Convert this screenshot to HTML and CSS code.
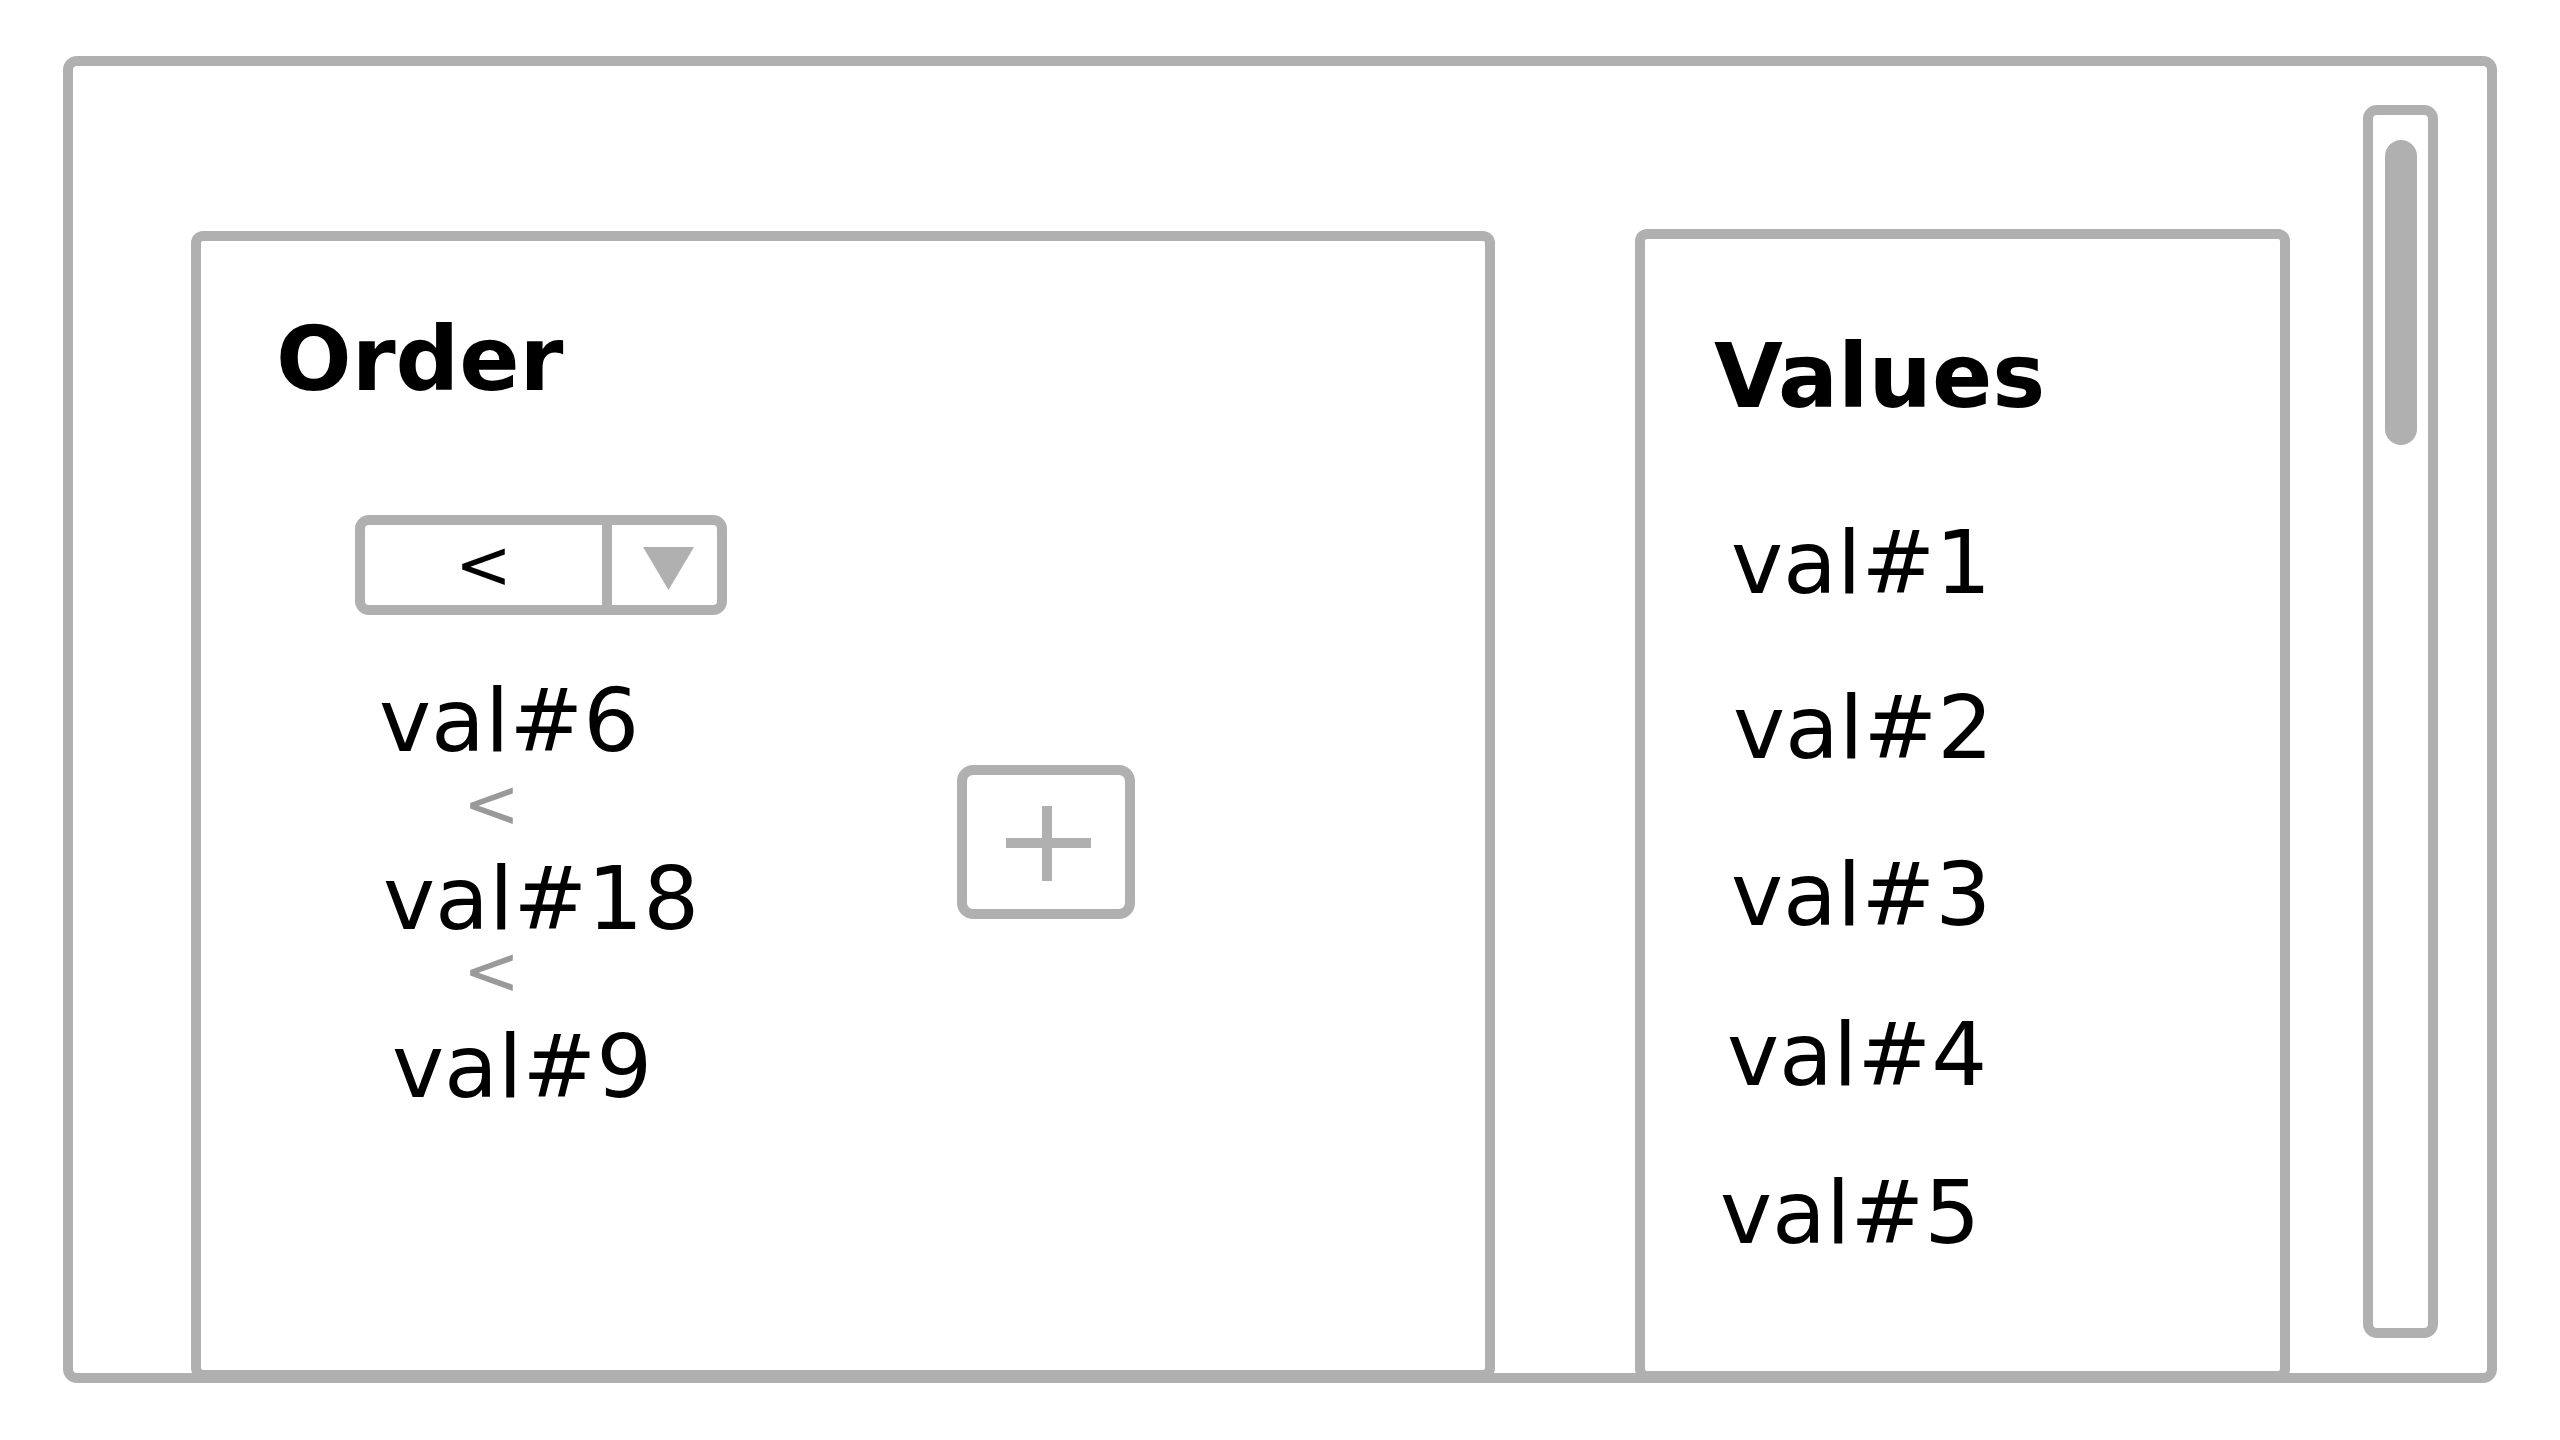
FILE: index.html
```html
<!DOCTYPE html>
<html lang="en">
<head>
<meta charset="utf-8">
<title>Order</title>
<link rel="stylesheet" href="styles.css">
</head>
<body>
<div class="frame">
  <section class="panel order-panel">
    <h2 class="title">Order</h2>
    <div class="order-body">
      <div class="order-col">
        <div class="select">
          <span class="select-value">&lt;</span>
          <span class="select-arrow">
            <svg width="51" height="43" viewBox="0 0 51 43"><polygon points="0,0 51,0 25.5,43" fill="#b0b0b0"/></svg>
          </span>
        </div>
        <ul class="chain">
          <li class="chain-item">val#6</li>
          <li class="chain-sep">&lt;</li>
          <li class="chain-item">val#18</li>
          <li class="chain-sep">&lt;</li>
          <li class="chain-item">val#9</li>
        </ul>
      </div>
      <button class="add-btn" type="button">
        <svg width="85" height="75" viewBox="0 0 85 75"><rect x="0" y="32" width="85" height="10" fill="#b0b0b0"/><rect x="36" y="0" width="10" height="75" fill="#b0b0b0"/></svg>
      </button>
    </div>
  </section>
  <section class="panel values-panel">
    <h2 class="title">Values</h2>
    <ul class="values">
      <li class="value-item">val#1</li>
      <li class="value-item">val#2</li>
      <li class="value-item">val#3</li>
      <li class="value-item">val#4</li>
      <li class="value-item">val#5</li>
    </ul>
  </section>
  <div class="scrollbar"><div class="thumb"></div></div>
</div>
</body>
</html>
```

FILE: styles.css
```css
* {
  box-sizing: border-box;
  margin: 0;
  padding: 0;
}

body {
  margin: 0;
  background: #ffffff;
  color: #000000;
  font-family: "DejaVu Sans", "Noto Sans", sans-serif;
}

.frame {
  margin: 56px 0 0 63px;
  width: 2434px;
  height: 1327px;
  border: 10px solid #b0b0b0;
  border-radius: 14px;
  display: flex;
  align-items: flex-start;
  padding-left: 118px;
}

.panel {
  flex: none;
  border: 10px solid #b0b0b0;
  border-radius: 12px;
  background: #ffffff;
}

.title {
  font-size: 89px;
  font-weight: bold;
  line-height: 89px;
}

/* Order panel */
.order-panel {
  width: 1304px;
  height: 1149px;
  margin-top: 165px;
  padding: 74px 0 0 75px;
}

.order-body {
  display: flex;
  align-items: flex-start;
  margin-top: 111px;
  padding-left: 79px;
}

.order-col {
  display: flex;
  flex-direction: column;
}

.select {
  display: flex;
  width: 372px;
  height: 100px;
  border: 10px solid #b0b0b0;
  border-radius: 14px;
}

.select-value {
  width: 237px;
  display: flex;
  align-items: center;
  justify-content: center;
  font-size: 68px;
  line-height: 1;
}

.select-arrow {
  flex: 1;
  border-left: 10px solid #b0b0b0;
  display: flex;
  align-items: center;
  justify-content: center;
  padding: 7px 0 0 8px;
}

.select-arrow svg {
  display: block;
}

.chain {
  list-style: none;
  margin-top: 62px;
}

.chain-item {
  font-size: 88px;
  line-height: 88px;
  margin-left: 24px;
}

.chain-item:nth-child(3) {
  margin-left: 28px;
}

.chain-item:nth-child(5) {
  margin-left: 37px;
}

.chain-sep {
  color: #999999;
  font-size: 68px;
  line-height: 60px;
  height: 60px;
  margin: 0 0 21px 108px;
}

.chain-sep:nth-child(2) {
  margin-top: 9px;
}

.chain-sep:nth-child(4) {
  margin-top: -2px;
  margin-bottom: 22px;
}

.add-btn {
  flex: none;
  appearance: none;
  width: 178px;
  height: 154px;
  margin: 250px 0 0 230px;
  border: 10px solid #b0b0b0;
  border-radius: 16px;
  background: #ffffff;
  display: flex;
  align-items: center;
  justify-content: center;
  padding: 2px 0 0 4px;
}

.add-btn svg {
  display: block;
}

/* Values panel */
.values-panel {
  width: 655px;
  height: 1152px;
  margin: 163px 0 0 140px;
  padding: 93px 0 0 69px;
}

.values {
  list-style: none;
  margin-top: 98px;
}

.value-item {
  font-size: 88px;
  line-height: 88px;
  margin-left: 17px;
}

.value-item:nth-child(2) {
  margin-top: 77px;
  margin-left: 19px;
}

.value-item:nth-child(3) {
  margin-top: 79px;
  margin-left: 17px;
}

.value-item:nth-child(4) {
  margin-top: 72px;
  margin-left: 13px;
}

.value-item:nth-child(5) {
  margin-top: 70px;
  margin-left: 6px;
}

/* Scrollbar */
.scrollbar {
  flex: none;
  width: 75px;
  height: 1233px;
  margin: 39px 0 0 73px;
  border: 10px solid #b0b0b0;
  border-radius: 14px;
  padding: 25px 0 0 12px;
}

.thumb {
  width: 32px;
  height: 305px;
  background: #b0b0b0;
  border-radius: 16px;
}
```
